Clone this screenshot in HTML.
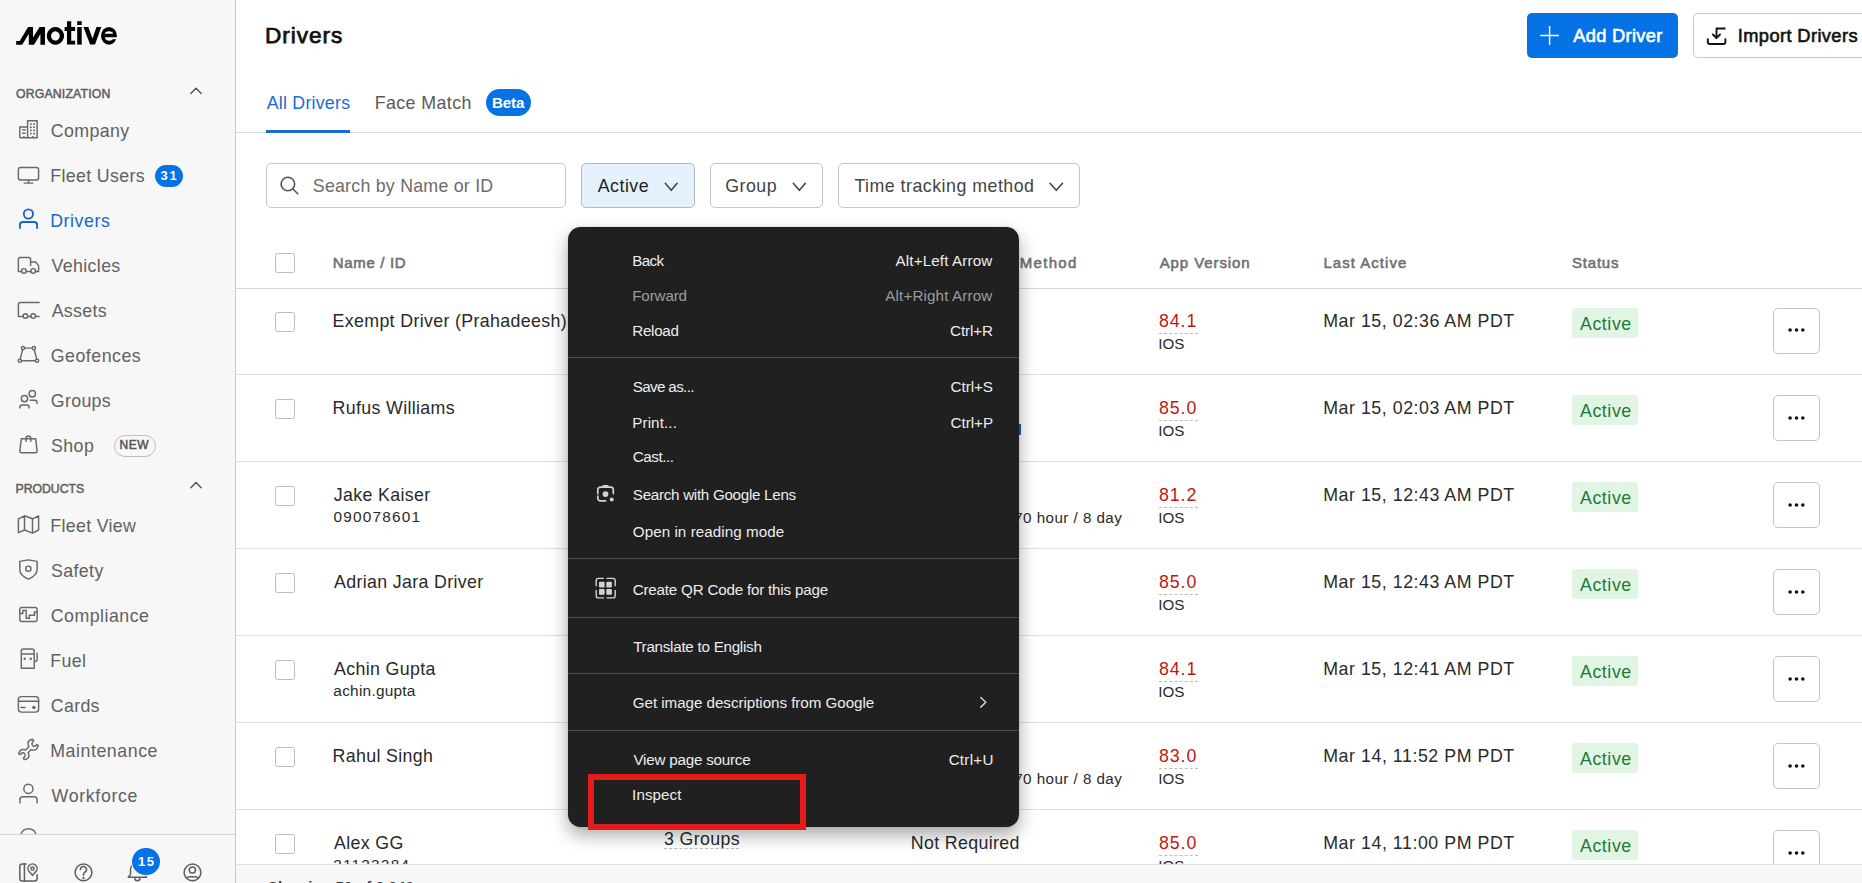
<!DOCTYPE html>
<html><head><meta charset="utf-8"><title>Drivers</title>
<style>
html,body{margin:0;padding:0;width:1862px;height:883px;overflow:hidden;background:#fff;}
body{position:relative;font-family:"Liberation Sans",sans-serif;}
.t{position:absolute;white-space:nowrap;}
</style></head><body>
<div style="position:absolute;left:0;top:0;width:235px;height:883px;background:#f7f7f7;border-right:1px solid #c8c8c8"></div>
<svg style="position:absolute;left:0;top:0" width="236" height="883" viewBox="0 0 236 883">
<g fill="#000">
<path d="M16.2 40.9 H19.7 L28.1 27 H33 V37.6 L39.6 27 H45 V44.7 H40.4 V34.1 L34.1 44.7 H28.8 V33.8 L22.2 44.7 H16.2 Z"/>
<path fill-rule="evenodd" d="M55.4 27.1 a8.6 8.8 0 1 0 0.01 0 Z M55.4 31.3 a4.3 4.6 0 1 1 -0.01 0 Z"/>
<path d="M67 21.2 H71.2 V27.1 H75.1 V31 H71.2 V40.7 H75.1 V44.6 H67 V31 H64.6 V27.1 H67 Z"/>
<rect x="77.2" y="21.2" width="4.5" height="3.8"/>
<rect x="77.2" y="27.1" width="4.5" height="17.5"/>
<path d="M83.4 27.1 H88.3 L92.5 38.6 L96.5 27.1 H101.3 L95 44.6 H90.1 Z"/>
</g>
<ellipse cx="108.95" cy="35.85" rx="7.95" ry="8.85" fill="#000"/>
<path d="M104.9 33.8 A4.05 2.6 0 0 1 113 33.8 Z" fill="#f7f7f7"/>
<path d="M104.9 37.2 H117.5 V39.2 H112.6 C111.8 40.2 110.4 40.7 108.95 40.7 C106.8 40.7 105.2 39.3 104.9 37.2 Z" fill="#f7f7f7"/>
</svg>
<div class="t" style="left:15.92px;top:87.59px;font-size:12.3px;line-height:12.3px;color:#5f5f5f;font-weight:400;letter-spacing:0.171px;-webkit-text-stroke:0.5px #5f5f5f;">ORGANIZATION</div>
<div class="t" style="left:15.49px;top:483.29px;font-size:12.3px;line-height:12.3px;color:#5f5f5f;font-weight:400;letter-spacing:-0.035px;-webkit-text-stroke:0.5px #5f5f5f;">PRODUCTS</div>
<div class="t" style="left:50.80px;top:122.63px;font-size:17.8px;line-height:17.8px;color:#616161;font-weight:400;letter-spacing:0.376px;">Company</div>
<div class="t" style="left:50.24px;top:167.63px;font-size:17.8px;line-height:17.8px;color:#616161;font-weight:400;letter-spacing:0.360px;">Fleet Users</div>
<div class="t" style="left:50.24px;top:212.63px;font-size:17.8px;line-height:17.8px;color:#1766cc;font-weight:400;letter-spacing:0.540px;">Drivers</div>
<div class="t" style="left:51.62px;top:257.63px;font-size:17.8px;line-height:17.8px;color:#616161;font-weight:400;letter-spacing:0.346px;">Vehicles</div>
<div class="t" style="left:51.67px;top:302.63px;font-size:17.8px;line-height:17.8px;color:#616161;font-weight:400;letter-spacing:0.332px;">Assets</div>
<div class="t" style="left:50.80px;top:347.63px;font-size:17.8px;line-height:17.8px;color:#616161;font-weight:400;letter-spacing:0.481px;">Geofences</div>
<div class="t" style="left:50.80px;top:392.63px;font-size:17.8px;line-height:17.8px;color:#616161;font-weight:400;letter-spacing:0.313px;">Groups</div>
<div class="t" style="left:50.89px;top:437.63px;font-size:17.8px;line-height:17.8px;color:#616161;font-weight:400;letter-spacing:0.461px;">Shop</div>
<div class="t" style="left:50.24px;top:518.13px;font-size:17.8px;line-height:17.8px;color:#616161;font-weight:400;letter-spacing:0.326px;">Fleet View</div>
<div class="t" style="left:50.89px;top:563.13px;font-size:17.8px;line-height:17.8px;color:#616161;font-weight:400;letter-spacing:0.416px;">Safety</div>
<div class="t" style="left:50.80px;top:608.13px;font-size:17.8px;line-height:17.8px;color:#616161;font-weight:400;letter-spacing:0.467px;">Compliance</div>
<div class="t" style="left:50.24px;top:653.13px;font-size:17.8px;line-height:17.8px;color:#616161;font-weight:400;letter-spacing:0.408px;">Fuel</div>
<div class="t" style="left:50.80px;top:698.13px;font-size:17.8px;line-height:17.8px;color:#616161;font-weight:400;letter-spacing:0.316px;">Cards</div>
<div class="t" style="left:50.24px;top:743.13px;font-size:17.8px;line-height:17.8px;color:#616161;font-weight:400;letter-spacing:0.542px;">Maintenance</div>
<div class="t" style="left:51.62px;top:788.13px;font-size:17.8px;line-height:17.8px;color:#616161;font-weight:400;letter-spacing:0.649px;">Workforce</div>
<div class="t" style="left:50.24px;top:833.13px;font-size:17.8px;line-height:17.8px;color:#616161;font-weight:400;letter-spacing:-0.037px;">Reports</div>
<div style="position:absolute;left:155px;top:165px;width:28px;height:22px;border-radius:11px;background:#0573e6"></div>
<div class="t" style="left:160.50px;top:168.50px;font-size:13px;line-height:13px;color:#fff;font-weight:700;letter-spacing:1.700px;">31</div>
<div style="position:absolute;left:114.4px;top:435.2px;width:39.5px;height:19.5px;border-radius:11px;border:1px solid #bdbdbd"></div>
<div class="t" style="left:119.62px;top:438.74px;font-size:12px;line-height:12px;color:#555;font-weight:400;letter-spacing:0.464px;-webkit-text-stroke:0.5px #555;">NEW</div>
<div style="position:absolute;left:0;top:834px;width:235px;height:49px;background:#f7f7f7;border-top:1px solid #d4d4d4"></div>
<svg style="position:absolute;left:0;top:0" width="236" height="883" viewBox="0 0 236 883" fill="none" stroke="#686868" stroke-width="1.45" stroke-linecap="round" stroke-linejoin="round">
<!-- company -->
<path d="M19.8 137.7 V126.9 H27.6 M27.6 137.7 V120.8 H37.1 V137.7 H19.8" stroke-linecap="butt" stroke-linejoin="miter"/>
<g fill="#686868" stroke="none">
<rect x="30" y="123.2" width="1.7" height="1.7"/><rect x="33.2" y="123.2" width="1.7" height="1.7"/>
<rect x="30" y="126.4" width="1.7" height="1.7"/><rect x="33.2" y="126.4" width="1.7" height="1.7"/>
<rect x="30" y="129.5" width="1.7" height="1.7"/><rect x="33.2" y="129.5" width="1.7" height="1.7"/>
<rect x="30" y="132.7" width="1.7" height="1.7"/><rect x="33.2" y="132.7" width="1.7" height="1.7"/>
<rect x="22.2" y="129.1" width="3.4" height="1.5"/><rect x="22.2" y="132.5" width="3.4" height="1.5"/>
<rect x="23.2" y="136" width="1.4" height="1.8"/><rect x="32" y="136" width="1.4" height="1.8"/>
</g>
<!-- monitor -->
<rect x="18.4" y="167.5" width="20.2" height="12.4" rx="2.2"/>
<path d="M28.5 180 V183.1 M24.2 183.1 H32.9"/>
<!-- drivers (blue) -->
<g stroke="#1766cc" stroke-width="1.9">
<circle cx="28.4" cy="214" r="4.6"/>
<path d="M19.9 228.8 V225 a3 3 0 0 1 3 -3 H34.1 a3 3 0 0 1 3 3 V228.8" stroke-linecap="butt"/>
</g>
<!-- truck -->
<path d="M21.5 271.4 H18.4 V259.5 a2 2 0 0 1 2 -2 H28.6 a2 2 0 0 1 2 2 V265.4 M30.6 262 H35.6 L38.6 265.6 V271.4 H35.5 M26.3 271.4 H30.8"/>
<circle cx="23.9" cy="270.9" r="2.3"/><circle cx="33.2" cy="270.9" r="2.3"/>
<!-- trailer -->
<path d="M39.1 302.5 H20.4 a2 2 0 0 0 -2 2 V316.4 H23.1 M27.7 316.4 H30.9 M35.5 316.4 H39.1"/>
<circle cx="25.4" cy="316" r="2.3"/><circle cx="33.2" cy="316" r="2.3"/>
<!-- geofence -->
<path d="M24.6 348.1 H32.3 M22.6 349.7 L20.2 359.1 M34.3 349.7 L36.7 359.1 M21.4 360.7 H35.5"/>
<circle cx="23" cy="348.1" r="1.6"/><circle cx="33.9" cy="348.1" r="1.6"/><circle cx="19.8" cy="360.7" r="1.6"/><circle cx="37.1" cy="360.7" r="1.6"/>
<!-- groups -->
<circle cx="24.5" cy="398.6" r="3.2"/>
<path d="M19.9 408.6 V407.4 a2.5 2.5 0 0 1 2.5 -2.5 H26.6 a2.5 2.5 0 0 1 2.5 2.5 V408.6" stroke-linecap="butt"/>
<circle cx="32.3" cy="393.8" r="3.2"/>
<path d="M30.3 400.3 H34.6 a2.5 2.5 0 0 1 2.5 2.5 V403.5"/>
<!-- shop -->
<path d="M21.3 438.8 H35.7 L37.1 451.2 a1.5 1.5 0 0 1 -1.5 1.5 H21.3 a1.5 1.5 0 0 1 -1.5 -1.5 Z"/>
<path d="M26.1 441.2 V438.4 a2.35 2.35 0 0 1 4.7 0 V441.2"/>
<!-- map -->
<path d="M18.4 518.8 L24.5 515.8 L32.5 518.8 L38.6 515.9 V530 L32.5 533.1 L24.5 530 L18.4 532.7 Z M24.5 515.8 V530 M32.5 518.8 V533.1"/>
<!-- shield -->
<path d="M28.4 559.9 L37.1 561.4 V569.6 C37.1 574 33 577.3 28.4 579.1 C23.8 577.3 19.8 574 19.8 569.6 V561.4 Z"/>
<circle cx="28.4" cy="568.7" r="2.6"/>
<!-- compliance -->
<rect x="19.8" y="607.5" width="17.3" height="13.9" rx="2"/>
<path d="M19.8 613.4 H22.8 V610.5 H26.2 V618.3 H29.3 V615.3 H34.4 V612 H37.1" stroke-linejoin="miter" stroke-linecap="butt"/>
<!-- fuel -->
<path d="M21.3 668.3 V651 a2 2 0 0 1 2 -2 H32.2 a2 2 0 0 1 2 2 V668.3 Z M21.3 654 H34.2 M34.2 661.6 H35.1 a2 2 0 0 0 2 -2 V653.3"/>
<circle cx="24.7" cy="658.7" r="0.5" fill="#686868"/><circle cx="30.8" cy="658.7" r="0.5" fill="#686868"/>
<!-- cards -->
<rect x="18.4" y="696.6" width="20.2" height="15.5" rx="3"/>
<path d="M18.4 701.2 H38.6 M21 707.5 H25"/>
<circle cx="33.9" cy="707.5" r="1.8" fill="#686868" stroke="none"/>
<!-- wrench -->
<path d="M32.5 739.3 C30 739.8 28.5 740.8 28 742.5 C27.8 744 28.4 745.6 28.8 746.8 L25.7 749.9 C24.5 749.4 22.8 749.3 21.3 749.8 C20 750.3 19.2 751.9 18.6 753.5 L20.1 754.6 C21 753.6 21.9 752.9 23 752.8 C24.3 752.8 25.4 754 25.1 755.5 C24.7 756.8 23.6 757.5 23.3 758.5 L24.6 759.6 C26.5 759.2 28.5 758.6 28.9 756.6 C29.3 755 28.7 753.8 28.1 752.7 L31.1 749.6 C32.6 750.2 34.3 750.3 35.7 749.6 C37 748.9 37.8 747.2 38.4 745.5 L37 744.5 C36.2 745.5 35.2 746.2 34.2 746.2 C32.8 746.1 31.8 745.1 32 743.5 C32.3 742.3 33.3 741.5 33.6 740.4 Z"/>
<!-- workforce -->
<circle cx="28.4" cy="788.8" r="4.6"/>
<path d="M19.9 803.6 V799.8 a3 3 0 0 1 3 -3 H34.1 a3 3 0 0 1 3 3 V803.6" stroke-linecap="butt"/>
<!-- chevrons -->
<path d="M190.8 93.5 L196 88.2 L201.2 93.5" stroke="#555"/>
<path d="M190.8 487.8 L196 482.5 L201.2 487.8" stroke="#555"/>
</svg>
<svg style="position:absolute;left:0;top:820px" width="60" height="14" viewBox="0 820 60 14"><path d="M20.9 834.5 A7.8 7.8 0 0 1 36 834.5" fill="none" stroke="#686868" stroke-width="1.45"/></svg>
<svg style="position:absolute;left:0;top:835px" width="236" height="48" viewBox="0 835 236 48" fill="none" stroke="#606060" stroke-width="1.5" stroke-linecap="round" stroke-linejoin="round">
<path d="M26.6 863.9 H22.3 a2.5 2.5 0 0 0 -2.5 2.5 V878.4 a2.5 2.5 0 0 0 2.5 2.5 H34.6 a2.5 2.5 0 0 0 2.5 -2.5 V874.3" stroke-linecap="butt"/>
<path d="M24.4 864 V880.9"/>
<path d="M32.5 875.3 L29.1 871.6 A4.6 4.6 0 1 1 35.9 871.6 Z"/>
<circle cx="32.5" cy="868.5" r="1.6"/>
<circle cx="83.5" cy="872.4" r="8.4"/>
<path d="M80.5 869.6 A3 3 0 1 1 84.8 872.2 C84 872.7 83.5 873.3 83.5 874.5 V875.2"/>
<circle cx="83.5" cy="878" r="0.45" fill="#606060"/>
<path d="M128.2 877.2 L130.5 874.6 V869.5 A6.9 6.9 0 0 1 144.3 869.5 V874.6 L146.6 877.2 Z"/>
<path d="M134.9 878.2 A2.5 2.5 0 0 0 139.9 878.2"/>
<circle cx="192.5" cy="872.4" r="8.4"/>
<circle cx="192.4" cy="870" r="3.1"/>
<path d="M186.9 878.6 C187.3 877.4 188.2 876.8 189.6 876.8 H195.4 C196.8 876.8 197.7 877.4 198.1 878.6"/>
</svg>
<div style="position:absolute;left:132px;top:847.6px;width:27.8px;height:27.8px;border-radius:50%;background:#0573e8;box-shadow:0 0 0 1px #f7f7f7"></div>
<div class="t" style="left:137.98px;top:855.10px;font-size:13px;line-height:13px;color:#fff;font-weight:700;letter-spacing:1.520px;">15</div>
<div class="t" style="left:265.05px;top:25.37px;font-size:22.6px;line-height:22.6px;color:#111;font-weight:400;letter-spacing:0.934px;-webkit-text-stroke:0.75px #111;">Drivers</div>
<div style="position:absolute;left:1527px;top:13px;width:151px;height:45px;border-radius:5px;background:#0573e6"></div>
<svg style="position:absolute;left:1538px;top:24px" width="23" height="23" viewBox="0 0 23 23"><path d="M11.6 2.1 V21 M2.2 11.55 H21" stroke="#fff" stroke-width="1.4"/></svg>
<div class="t" style="left:1573.26px;top:26.81px;font-size:18.3px;line-height:18.3px;color:#fff;font-weight:400;letter-spacing:0.299px;-webkit-text-stroke:0.6px #fff;">Add Driver</div>
<div style="position:absolute;left:1693px;top:13px;width:190px;height:43px;border-radius:5px;background:#fff;border:1px solid #c9c9c9"></div>
<svg style="position:absolute;left:1700px;top:20px" width="35" height="32" viewBox="1700 20 35 32" fill="none" stroke="#111" stroke-width="1.9" stroke-linecap="round" stroke-linejoin="round"><path d="M1707.8 39.2 V42 a2 2 0 0 0 2 2 H1723.4 a2 2 0 0 0 2 -2 V39.2"/><path d="M1725.5 28.5 H1716.5 V37.6" stroke-linecap="butt"/><path d="M1712.9 34.5 L1716.5 38 L1720 34.5"/></svg>
<div class="t" style="left:1737.81px;top:26.81px;font-size:18.3px;line-height:18.3px;color:#111;font-weight:400;letter-spacing:0.381px;-webkit-text-stroke:0.6px #111;">Import Drivers</div>
<div class="t" style="left:266.67px;top:94.73px;font-size:17.8px;line-height:17.8px;color:#1b6bd6;font-weight:400;letter-spacing:0.238px;">All Drivers</div>
<div class="t" style="left:374.74px;top:94.73px;font-size:17.8px;line-height:17.8px;color:#5b5b5b;font-weight:400;letter-spacing:0.414px;">Face Match</div>
<div style="position:absolute;left:486.3px;top:89px;width:44.4px;height:27px;border-radius:14px;background:#0573e6"></div>
<div class="t" style="left:491.98px;top:95.13px;font-size:15.2px;line-height:15.2px;color:#fff;font-weight:700;letter-spacing:-0.142px;">Beta</div>
<div style="position:absolute;left:236px;top:132px;width:1626px;height:1px;background:#dcdcdc"></div>
<div style="position:absolute;left:266px;top:129.5px;width:84px;height:3px;background:#1b6bd6"></div>
<div style="position:absolute;left:266px;top:163px;width:298px;height:43px;border:1px solid #c6c6c6;border-radius:5px;background:#fff"></div>
<svg style="position:absolute;left:272px;top:170px" width="32" height="32" viewBox="272 170 32 32" fill="none" stroke="#555" stroke-width="1.6" stroke-linecap="round"><circle cx="287.9" cy="184" r="6.8"/><path d="M292.9 189 L297.8 193.8"/></svg>
<div class="t" style="left:312.79px;top:178.43px;font-size:17.8px;line-height:17.8px;color:#6c6c6c;font-weight:400;letter-spacing:0.235px;">Search by Name or ID</div>
<div style="position:absolute;left:581px;top:163px;width:112px;height:43px;border:1px solid #a9bccd;border-radius:5px;background:#e5f2fd"></div>
<div class="t" style="left:597.77px;top:178.43px;font-size:17.8px;line-height:17.8px;color:#222;font-weight:400;letter-spacing:0.491px;">Active</div>
<svg style="position:absolute;left:0;top:0;overflow:visible" width="1" height="1"><path d="M665.3 183.3 L671.2 190.3 L677.1 183.3" fill="none" stroke="#444" stroke-width="1.6" stroke-linecap="round" stroke-linejoin="round"/></svg>
<div style="position:absolute;left:710px;top:163px;width:111px;height:43px;border:1px solid #c6c6c6;border-radius:5px;background:#fff"></div>
<div class="t" style="left:725.30px;top:178.43px;font-size:17.8px;line-height:17.8px;color:#444;font-weight:400;letter-spacing:0.467px;">Group</div>
<svg style="position:absolute;left:0;top:0;overflow:visible" width="1" height="1"><path d="M793.3 183.3 L799.3499999999999 190.3 L805.4 183.3" fill="none" stroke="#444" stroke-width="1.6" stroke-linecap="round" stroke-linejoin="round"/></svg>
<div style="position:absolute;left:838px;top:163px;width:240px;height:43px;border:1px solid #c6c6c6;border-radius:5px;background:#fff"></div>
<div class="t" style="left:854.40px;top:178.43px;font-size:17.8px;line-height:17.8px;color:#444;font-weight:400;letter-spacing:0.487px;">Time tracking method</div>
<svg style="position:absolute;left:0;top:0;overflow:visible" width="1" height="1"><path d="M1050 183.3 L1056.25 190.3 L1062.5 183.3" fill="none" stroke="#444" stroke-width="1.6" stroke-linecap="round" stroke-linejoin="round"/></svg>
<div style="position:absolute;left:275px;top:253px;width:18px;height:18px;border:1px solid #bcbcbc;border-radius:2.5px;background:#fff"></div>
<div class="t" style="left:332.77px;top:255.10px;font-size:15px;line-height:15px;color:#6f6f6f;font-weight:400;letter-spacing:0.667px;-webkit-text-stroke:0.55px #6f6f6f;">Name / ID</div>
<div class="t" style="left:1019.77px;top:255.10px;font-size:15px;line-height:15px;color:#6f6f6f;font-weight:400;letter-spacing:1.313px;-webkit-text-stroke:0.55px #6f6f6f;">Method</div>
<div class="t" style="left:1159.67px;top:255.10px;font-size:15px;line-height:15px;color:#6f6f6f;font-weight:400;letter-spacing:0.911px;-webkit-text-stroke:0.55px #6f6f6f;">App Version</div>
<div class="t" style="left:1323.47px;top:255.10px;font-size:15px;line-height:15px;color:#6f6f6f;font-weight:400;letter-spacing:1.026px;-webkit-text-stroke:0.55px #6f6f6f;">Last Active</div>
<div class="t" style="left:1571.92px;top:255.10px;font-size:15px;line-height:15px;color:#6f6f6f;font-weight:400;letter-spacing:0.820px;-webkit-text-stroke:0.55px #6f6f6f;">Status</div>
<div style="position:absolute;left:236px;top:288px;width:1626px;height:1px;background:#d6d6d9"></div>
<div style="position:absolute;left:275px;top:312px;width:18px;height:18px;border:1px solid #bcbcbc;border-radius:2.5px;background:#fff"></div>
<div class="t" style="left:332.54px;top:312.93px;font-size:17.8px;line-height:17.8px;color:#2a2a2a;font-weight:400;letter-spacing:0.350px;">Exempt Driver (Prahadeesh)</div>
<div class="t" style="left:1158.93px;top:312.93px;font-size:17.8px;line-height:17.8px;color:#c0170f;font-weight:400;letter-spacing:0.950px;">84.1</div>
<div style="position:absolute;left:1159px;top:333px;width:39px;height:0;border-top:1px dashed #bdbdbd"></div>
<div class="t" style="left:1158.30px;top:336.13px;font-size:15.2px;line-height:15.2px;color:#2a2a2a;font-weight:400;letter-spacing:-0.092px;">IOS</div>
<div class="t" style="left:1323.24px;top:312.93px;font-size:17.8px;line-height:17.8px;color:#2a2a2a;font-weight:400;letter-spacing:0.533px;">Mar 15, 02:36 AM PDT</div>
<div style="position:absolute;left:1572px;top:308.30px;width:66px;height:30px;border-radius:3px;background:#e1f5e4"></div>
<div class="t" style="left:1579.97px;top:316.23px;font-size:17.8px;line-height:17.8px;color:#1f7a37;font-weight:400;letter-spacing:0.571px;">Active</div>
<div style="position:absolute;left:1773px;top:308.10px;width:44.5px;height:43.5px;border:1px solid #c4c4c4;border-radius:5px;background:#fff"></div>
<svg style="position:absolute;left:1785px;top:326.40px" width="24" height="8" viewBox="0 0 24 8"><circle cx="5.1" cy="4" r="1.8" fill="#111"/><circle cx="11.5" cy="4" r="1.8" fill="#111"/><circle cx="17.8" cy="4" r="1.8" fill="#111"/></svg>
<div style="position:absolute;left:236px;top:374px;width:1626px;height:1px;background:#e0e0e2"></div>
<div style="position:absolute;left:275px;top:399px;width:18px;height:18px;border:1px solid #bcbcbc;border-radius:2.5px;background:#fff"></div>
<div class="t" style="left:332.54px;top:399.93px;font-size:17.8px;line-height:17.8px;color:#2a2a2a;font-weight:400;letter-spacing:0.350px;">Rufus Williams</div>
<div class="t" style="left:1158.93px;top:399.93px;font-size:17.8px;line-height:17.8px;color:#c0170f;font-weight:400;letter-spacing:0.950px;">85.0</div>
<div style="position:absolute;left:1159px;top:420px;width:39px;height:0;border-top:1px dashed #bdbdbd"></div>
<div class="t" style="left:1158.30px;top:423.13px;font-size:15.2px;line-height:15.2px;color:#2a2a2a;font-weight:400;letter-spacing:-0.092px;">IOS</div>
<div class="t" style="left:1323.24px;top:399.93px;font-size:17.8px;line-height:17.8px;color:#2a2a2a;font-weight:400;letter-spacing:0.533px;">Mar 15, 02:03 AM PDT</div>
<div style="position:absolute;left:1572px;top:395.30px;width:66px;height:30px;border-radius:3px;background:#e1f5e4"></div>
<div class="t" style="left:1579.97px;top:403.23px;font-size:17.8px;line-height:17.8px;color:#1f7a37;font-weight:400;letter-spacing:0.571px;">Active</div>
<div style="position:absolute;left:1773px;top:395.10px;width:44.5px;height:43.5px;border:1px solid #c4c4c4;border-radius:5px;background:#fff"></div>
<svg style="position:absolute;left:1785px;top:413.60px" width="24" height="8" viewBox="0 0 24 8"><circle cx="5.1" cy="4" r="1.8" fill="#111"/><circle cx="11.5" cy="4" r="1.8" fill="#111"/><circle cx="17.8" cy="4" r="1.8" fill="#111"/></svg>
<div style="position:absolute;left:236px;top:461px;width:1626px;height:1px;background:#e0e0e2"></div>
<div style="position:absolute;left:275px;top:486px;width:18px;height:18px;border:1px solid #bcbcbc;border-radius:2.5px;background:#fff"></div>
<div class="t" style="left:333.72px;top:486.93px;font-size:17.8px;line-height:17.8px;color:#2a2a2a;font-weight:400;letter-spacing:0.350px;">Jake Kaiser</div>
<div class="t" style="left:333.40px;top:508.96px;font-size:15.4px;line-height:15.4px;color:#2a2a2a;font-weight:400;letter-spacing:1.200px;">090078601</div>
<div class="t" style="left:1158.93px;top:486.93px;font-size:17.8px;line-height:17.8px;color:#c0170f;font-weight:400;letter-spacing:0.950px;">81.2</div>
<div style="position:absolute;left:1159px;top:507px;width:39px;height:0;border-top:1px dashed #bdbdbd"></div>
<div class="t" style="left:1158.30px;top:510.13px;font-size:15.2px;line-height:15.2px;color:#2a2a2a;font-weight:400;letter-spacing:-0.092px;">IOS</div>
<div class="t" style="left:1323.24px;top:486.93px;font-size:17.8px;line-height:17.8px;color:#2a2a2a;font-weight:400;letter-spacing:0.533px;">Mar 15, 12:43 AM PDT</div>
<div class="t" style="left:1014.22px;top:510.13px;font-size:15.2px;line-height:15.2px;color:#2a2a2a;font-weight:400;letter-spacing:0.450px;">70 hour / 8 day</div>
<div style="position:absolute;left:1572px;top:482.30px;width:66px;height:30px;border-radius:3px;background:#e1f5e4"></div>
<div class="t" style="left:1579.97px;top:490.23px;font-size:17.8px;line-height:17.8px;color:#1f7a37;font-weight:400;letter-spacing:0.571px;">Active</div>
<div style="position:absolute;left:1773px;top:482.10px;width:44.5px;height:43.5px;border:1px solid #c4c4c4;border-radius:5px;background:#fff"></div>
<svg style="position:absolute;left:1785px;top:500.60px" width="24" height="8" viewBox="0 0 24 8"><circle cx="5.1" cy="4" r="1.8" fill="#111"/><circle cx="11.5" cy="4" r="1.8" fill="#111"/><circle cx="17.8" cy="4" r="1.8" fill="#111"/></svg>
<div style="position:absolute;left:236px;top:548px;width:1626px;height:1px;background:#e0e0e2"></div>
<div style="position:absolute;left:275px;top:573px;width:18px;height:18px;border:1px solid #bcbcbc;border-radius:2.5px;background:#fff"></div>
<div class="t" style="left:333.97px;top:573.93px;font-size:17.8px;line-height:17.8px;color:#2a2a2a;font-weight:400;letter-spacing:0.350px;">Adrian Jara Driver</div>
<div class="t" style="left:1158.93px;top:573.93px;font-size:17.8px;line-height:17.8px;color:#c0170f;font-weight:400;letter-spacing:0.950px;">85.0</div>
<div style="position:absolute;left:1159px;top:594px;width:39px;height:0;border-top:1px dashed #bdbdbd"></div>
<div class="t" style="left:1158.30px;top:597.13px;font-size:15.2px;line-height:15.2px;color:#2a2a2a;font-weight:400;letter-spacing:-0.092px;">IOS</div>
<div class="t" style="left:1323.24px;top:573.93px;font-size:17.8px;line-height:17.8px;color:#2a2a2a;font-weight:400;letter-spacing:0.533px;">Mar 15, 12:43 AM PDT</div>
<div style="position:absolute;left:1572px;top:569.30px;width:66px;height:30px;border-radius:3px;background:#e1f5e4"></div>
<div class="t" style="left:1579.97px;top:577.23px;font-size:17.8px;line-height:17.8px;color:#1f7a37;font-weight:400;letter-spacing:0.571px;">Active</div>
<div style="position:absolute;left:1773px;top:569.10px;width:44.5px;height:43.5px;border:1px solid #c4c4c4;border-radius:5px;background:#fff"></div>
<svg style="position:absolute;left:1785px;top:587.60px" width="24" height="8" viewBox="0 0 24 8"><circle cx="5.1" cy="4" r="1.8" fill="#111"/><circle cx="11.5" cy="4" r="1.8" fill="#111"/><circle cx="17.8" cy="4" r="1.8" fill="#111"/></svg>
<div style="position:absolute;left:236px;top:635px;width:1626px;height:1px;background:#e0e0e2"></div>
<div style="position:absolute;left:275px;top:660px;width:18px;height:18px;border:1px solid #bcbcbc;border-radius:2.5px;background:#fff"></div>
<div class="t" style="left:333.97px;top:660.93px;font-size:17.8px;line-height:17.8px;color:#2a2a2a;font-weight:400;letter-spacing:0.350px;">Achin Gupta</div>
<div class="t" style="left:333.35px;top:682.96px;font-size:15.4px;line-height:15.4px;color:#2a2a2a;font-weight:400;letter-spacing:0.250px;">achin.gupta</div>
<div class="t" style="left:1158.93px;top:660.93px;font-size:17.8px;line-height:17.8px;color:#c0170f;font-weight:400;letter-spacing:0.950px;">84.1</div>
<div style="position:absolute;left:1159px;top:681px;width:39px;height:0;border-top:1px dashed #bdbdbd"></div>
<div class="t" style="left:1158.30px;top:684.13px;font-size:15.2px;line-height:15.2px;color:#2a2a2a;font-weight:400;letter-spacing:-0.092px;">IOS</div>
<div class="t" style="left:1323.24px;top:660.93px;font-size:17.8px;line-height:17.8px;color:#2a2a2a;font-weight:400;letter-spacing:0.533px;">Mar 15, 12:41 AM PDT</div>
<div style="position:absolute;left:1572px;top:656.30px;width:66px;height:30px;border-radius:3px;background:#e1f5e4"></div>
<div class="t" style="left:1579.97px;top:664.23px;font-size:17.8px;line-height:17.8px;color:#1f7a37;font-weight:400;letter-spacing:0.571px;">Active</div>
<div style="position:absolute;left:1773px;top:656.10px;width:44.5px;height:43.5px;border:1px solid #c4c4c4;border-radius:5px;background:#fff"></div>
<svg style="position:absolute;left:1785px;top:674.60px" width="24" height="8" viewBox="0 0 24 8"><circle cx="5.1" cy="4" r="1.8" fill="#111"/><circle cx="11.5" cy="4" r="1.8" fill="#111"/><circle cx="17.8" cy="4" r="1.8" fill="#111"/></svg>
<div style="position:absolute;left:236px;top:722px;width:1626px;height:1px;background:#e0e0e2"></div>
<div style="position:absolute;left:275px;top:747px;width:18px;height:18px;border:1px solid #bcbcbc;border-radius:2.5px;background:#fff"></div>
<div class="t" style="left:332.54px;top:747.93px;font-size:17.8px;line-height:17.8px;color:#2a2a2a;font-weight:400;letter-spacing:0.350px;">Rahul Singh</div>
<div class="t" style="left:1158.93px;top:747.93px;font-size:17.8px;line-height:17.8px;color:#c0170f;font-weight:400;letter-spacing:0.950px;">83.0</div>
<div style="position:absolute;left:1159px;top:768px;width:39px;height:0;border-top:1px dashed #bdbdbd"></div>
<div class="t" style="left:1158.30px;top:771.13px;font-size:15.2px;line-height:15.2px;color:#2a2a2a;font-weight:400;letter-spacing:-0.092px;">IOS</div>
<div class="t" style="left:1323.24px;top:747.93px;font-size:17.8px;line-height:17.8px;color:#2a2a2a;font-weight:400;letter-spacing:0.551px;">Mar 14, 11:52 PM PDT</div>
<div class="t" style="left:1014.22px;top:771.13px;font-size:15.2px;line-height:15.2px;color:#2a2a2a;font-weight:400;letter-spacing:0.450px;">70 hour / 8 day</div>
<div style="position:absolute;left:1572px;top:743.30px;width:66px;height:30px;border-radius:3px;background:#e1f5e4"></div>
<div class="t" style="left:1579.97px;top:751.23px;font-size:17.8px;line-height:17.8px;color:#1f7a37;font-weight:400;letter-spacing:0.571px;">Active</div>
<div style="position:absolute;left:1773px;top:743.10px;width:44.5px;height:43.5px;border:1px solid #c4c4c4;border-radius:5px;background:#fff"></div>
<svg style="position:absolute;left:1785px;top:761.60px" width="24" height="8" viewBox="0 0 24 8"><circle cx="5.1" cy="4" r="1.8" fill="#111"/><circle cx="11.5" cy="4" r="1.8" fill="#111"/><circle cx="17.8" cy="4" r="1.8" fill="#111"/></svg>
<div style="position:absolute;left:236px;top:809px;width:1626px;height:1px;background:#e0e0e2"></div>
<div style="position:absolute;left:275px;top:834px;width:18px;height:18px;border:1px solid #bcbcbc;border-radius:2.5px;background:#fff"></div>
<div class="t" style="left:333.97px;top:834.93px;font-size:17.8px;line-height:17.8px;color:#2a2a2a;font-weight:400;letter-spacing:0.350px;">Alex GG</div>
<div class="t" style="left:333.23px;top:856.96px;font-size:15.4px;line-height:15.4px;color:#2a2a2a;font-weight:400;letter-spacing:1.200px;">21123284</div>
<div class="t" style="left:1158.93px;top:834.93px;font-size:17.8px;line-height:17.8px;color:#c0170f;font-weight:400;letter-spacing:0.950px;">85.0</div>
<div style="position:absolute;left:1159px;top:855px;width:39px;height:0;border-top:1px dashed #bdbdbd"></div>
<div class="t" style="left:1158.30px;top:858.13px;font-size:15.2px;line-height:15.2px;color:#2a2a2a;font-weight:400;letter-spacing:-0.092px;">IOS</div>
<div class="t" style="left:1323.24px;top:834.93px;font-size:17.8px;line-height:17.8px;color:#2a2a2a;font-weight:400;letter-spacing:0.551px;">Mar 14, 11:00 PM PDT</div>
<div style="position:absolute;left:1572px;top:830.30px;width:66px;height:30px;border-radius:3px;background:#e1f5e4"></div>
<div class="t" style="left:1579.97px;top:838.23px;font-size:17.8px;line-height:17.8px;color:#1f7a37;font-weight:400;letter-spacing:0.571px;">Active</div>
<div style="position:absolute;left:1773px;top:830.10px;width:44.5px;height:43.5px;border:1px solid #c4c4c4;border-radius:5px;background:#fff"></div>
<svg style="position:absolute;left:1785px;top:848.60px" width="24" height="8" viewBox="0 0 24 8"><circle cx="5.1" cy="4" r="1.8" fill="#111"/><circle cx="11.5" cy="4" r="1.8" fill="#111"/><circle cx="17.8" cy="4" r="1.8" fill="#111"/></svg>
<div style="position:absolute;left:1019px;top:424px;width:2px;height:11px;background:#1a5fc0"></div>
<div class="t" style="left:664.02px;top:830.83px;font-size:17.8px;line-height:17.8px;color:#2a2a2a;font-weight:400;letter-spacing:0.372px;">3 Groups</div>
<div style="position:absolute;left:664px;top:848px;width:75px;height:0;border-top:1px dashed #bdbdbd"></div>
<div class="t" style="left:910.74px;top:834.93px;font-size:17.8px;line-height:17.8px;color:#2a2a2a;font-weight:400;letter-spacing:0.357px;">Not Required</div>
<div style="position:absolute;left:236px;top:864px;width:1626px;height:19px;background:#f7f7f7;border-top:1px solid #e2e2e2"></div>
<div class="t" style="left:267.77px;top:879.30px;font-size:15px;line-height:15px;color:#3a3a3a;font-weight:700;letter-spacing:0.149px;">Showing 50 of 2,940</div>
<div style="position:absolute;left:568px;top:227px;width:451px;height:600px;border-radius:12.5px;background:#202020;box-shadow:0 8px 18px rgba(0,0,0,0.34),0 0 3px rgba(0,0,0,0.12)"></div>
<div class="t" style="left:632.25px;top:253.03px;font-size:15.2px;line-height:15.2px;color:#ececec;font-weight:400;letter-spacing:-0.656px;">Back</div>
<div class="t" style="left:895.57px;top:253.03px;font-size:15.2px;line-height:15.2px;color:#ececec;font-weight:400;letter-spacing:0.127px;">Alt+Left Arrow</div>
<div class="t" style="left:632.25px;top:287.83px;font-size:15.2px;line-height:15.2px;color:#9c9c9c;font-weight:400;letter-spacing:-0.154px;">Forward</div>
<div class="t" style="left:885.27px;top:287.83px;font-size:15.2px;line-height:15.2px;color:#9c9c9c;font-weight:400;letter-spacing:0.130px;">Alt+Right Arrow</div>
<div class="t" style="left:632.25px;top:322.73px;font-size:15.2px;line-height:15.2px;color:#ececec;font-weight:400;letter-spacing:-0.289px;">Reload</div>
<div class="t" style="left:950.03px;top:322.73px;font-size:15.2px;line-height:15.2px;color:#ececec;font-weight:400;letter-spacing:-0.103px;">Ctrl+R</div>
<div style="position:absolute;left:568px;top:357px;width:451px;height:1px;background:#4a4a4a"></div>
<div class="t" style="left:632.81px;top:379.43px;font-size:15.2px;line-height:15.2px;color:#ececec;font-weight:400;letter-spacing:-0.657px;">Save as...</div>
<div class="t" style="left:950.53px;top:379.43px;font-size:15.2px;line-height:15.2px;color:#ececec;font-weight:400;letter-spacing:-0.037px;">Ctrl+S</div>
<div class="t" style="left:632.25px;top:414.63px;font-size:15.2px;line-height:15.2px;color:#ececec;font-weight:400;letter-spacing:0.102px;">Print...</div>
<div class="t" style="left:950.53px;top:414.63px;font-size:15.2px;line-height:15.2px;color:#ececec;font-weight:400;letter-spacing:-0.016px;">Ctrl+P</div>
<div class="t" style="left:632.73px;top:449.33px;font-size:15.2px;line-height:15.2px;color:#ececec;font-weight:400;letter-spacing:-0.427px;">Cast...</div>
<div class="t" style="left:632.81px;top:487.23px;font-size:15.2px;line-height:15.2px;color:#ececec;font-weight:400;letter-spacing:-0.286px;">Search with Google Lens</div>
<div class="t" style="left:632.78px;top:524.43px;font-size:15.2px;line-height:15.2px;color:#ececec;font-weight:400;letter-spacing:0.057px;">Open in reading mode</div>
<div style="position:absolute;left:568px;top:558px;width:451px;height:1px;background:#4a4a4a"></div>
<div class="t" style="left:632.73px;top:582.33px;font-size:15.2px;line-height:15.2px;color:#ececec;font-weight:400;letter-spacing:-0.205px;">Create QR Code for this page</div>
<div style="position:absolute;left:568px;top:617px;width:451px;height:1px;background:#4a4a4a"></div>
<div class="t" style="left:633.16px;top:639.43px;font-size:15.2px;line-height:15.2px;color:#ececec;font-weight:400;letter-spacing:-0.260px;">Translate to English</div>
<div style="position:absolute;left:568px;top:673px;width:451px;height:1px;background:#4a4a4a"></div>
<div class="t" style="left:632.74px;top:694.83px;font-size:15.2px;line-height:15.2px;color:#ececec;font-weight:400;letter-spacing:-0.048px;">Get image descriptions from Google</div>
<svg style="position:absolute;left:0;top:0;overflow:visible" width="1" height="1"><path d="M980.8 697.5 L985.8 702.3 L980.8 707.1" fill="none" stroke="#d0d0d0" stroke-width="1.5" stroke-linecap="round" stroke-linejoin="round"/></svg>
<div style="position:absolute;left:568px;top:730px;width:451px;height:1px;background:#4a4a4a"></div>
<div class="t" style="left:633.43px;top:752.23px;font-size:15.2px;line-height:15.2px;color:#ececec;font-weight:400;letter-spacing:-0.214px;">View page source</div>
<div class="t" style="left:948.63px;top:752.23px;font-size:15.2px;line-height:15.2px;color:#ececec;font-weight:400;letter-spacing:0.270px;">Ctrl+U</div>
<div class="t" style="left:632.10px;top:786.93px;font-size:15.2px;line-height:15.2px;color:#ececec;font-weight:400;letter-spacing:0.068px;">Inspect</div>
<svg style="position:absolute;left:0;top:0;overflow:visible" width="1" height="1" fill="none" stroke="#d2d2d2" stroke-width="1.7" stroke-linecap="round" stroke-linejoin="round">
<path d="M597.8 493.6 V489.8 a2.6 2.6 0 0 1 2.6 -2.6 H610.7 a2.6 2.6 0 0 1 2.6 2.6 V493.6"/>
<path d="M603.6 486.2 H607.5" stroke-width="2.4"/>
<path d="M597.8 496 V498.3 a2.6 2.6 0 0 0 2.6 2.6 H605.5"/>
<circle cx="605.5" cy="494.1" r="2.9" fill="#d2d2d2" stroke="none"/>
<circle cx="611.7" cy="499.4" r="2" fill="#d2d2d2" stroke="none"/>
<path d="M596.2 585.8 V580.6 a2.2 2.2 0 0 1 2.2 -2.2 H603.4 M607.1 578.4 H613 a2.2 2.2 0 0 1 2.2 2.2 V585.8 M615.2 590.5 V595.7 a2.2 2.2 0 0 1 -2.2 2.2 H607.1 M603.4 597.9 H598.4 a2.2 2.2 0 0 1 -2.2 -2.2 V590.5" stroke-width="1.4"/>
<g fill="#d2d2d2" stroke="none">
<rect x="599" y="581.8" width="5.6" height="5.6" rx="1"/><rect x="606.3" y="581.8" width="5.6" height="5.6" rx="1"/>
<rect x="599" y="589.1" width="5.6" height="5.6" rx="1"/><rect x="606.3" y="589.1" width="5.6" height="5.6" rx="1"/>
</g>
</svg>
<div style="position:absolute;left:588px;top:774px;width:206px;height:43.5px;border:6.3px solid #e31b1b"></div>
</body></html>
